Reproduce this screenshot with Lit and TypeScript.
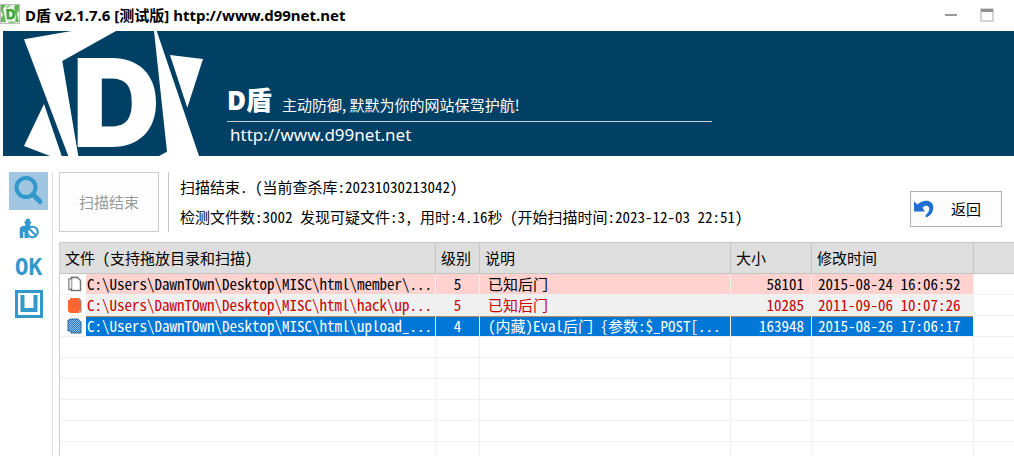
import { LitElement, html, css, svg } from "lit";
import { customElement, property, state } from "lit/decorators.js";
import { classMap } from "lit/directives/class-map.js";

interface ScanRow {
  path: string;
  level: number;
  note: string;
  size: number;
  modified: string;
  tone: "danger" | "muted" | "selected";
}

const ROWS: ScanRow[] = [
  {
    path: "C:\\Users\\DawnTOwn\\Desktop\\MISC\\html\\member\\...",
    level: 5,
    note: "已知后门",
    size: 58101,
    modified: "2015-08-24 16:06:52",
    tone: "danger",
  },
  {
    path: "C:\\Users\\DawnTOwn\\Desktop\\MISC\\html\\hack\\up...",
    level: 5,
    note: "已知后门",
    size: 10285,
    modified: "2011-09-06 10:07:26",
    tone: "muted",
  },
  {
    path: "C:\\Users\\DawnTOwn\\Desktop\\MISC\\html\\upload_...",
    level: 4,
    note: "(内藏)Eval后门 {参数:$_POST[...",
    size: 163948,
    modified: "2015-08-26 17:06:17",
    tone: "selected",
  },
];

const EMPTY_ROWS = 6;

@customElement("title-bar")
export class TitleBar extends LitElement {
  static styles = css`
    :host {
      display: flex;
      align-items: center;
      height: 31px;
      padding-right: 20px;
      background: #fff;
    }
    .app-icon {
      width: 20px;
      height: 20px;
      margin: 0 5px 4px 0;
    }
    .title {
      flex: 1;
      margin: 0;
      font: 700 15px/29px "Noto Sans", "Noto Sans CJK SC", sans-serif;
      color: #000;
      white-space: nowrap;
    }
    .control {
      display: block;
      width: 14px;
      height: 14px;
      margin: 0 0 2px 22px;
      padding: 0;
      border: 0;
      background: none;
    }
    svg {
      display: block;
    }
  `;

  render() {
    return html`
      <svg class="app-icon" viewBox="0 0 20 20" aria-hidden="true">
        <rect x="0.5" y="0.5" width="19" height="19" fill="#eef5ea" stroke="#b9bcb9" />
        <path d="M1 1h5l-3 4 3 13H1V14l2-3-2-4z M15 1h4v5l-2 4 2 8h-4l1-6-2-8z" fill="#63b657" />
        <path
          d="M6 5h4.500c3.300 0 5 2 5 5s-1.700 5.500-5 5.500H7z M9 7.500l.4 5.500h1c1.500 0 2.100-1.200 2.100-2.900S11.800 7.500 10.300 7.500z"
          fill="#45a53c"
          fill-rule="evenodd"
        />
        <path d="M6 2l6-1-5 3z M8 17.500h7l-1 1.500H9z" fill="#7cc46f" />
      </svg>
      <h1 class="title">D盾 v2.1.7.6 [测试版] http://www.d99net.net</h1>
      <button class="control" aria-label="最小化">
        <svg width="14" height="14"><rect x="1" y="6" width="12" height="2" fill="#999" /></svg>
      </button>
      <button class="control" aria-label="最大化">
        <svg width="14" height="14">
          <rect x="1" y="1" width="12" height="12" fill="#fff" stroke="#aaa" />
          <rect x="1" y="1" width="12" height="3" fill="#909090" />
        </svg>
      </button>
    `;
  }
}

@customElement("brand-banner")
export class BrandBanner extends LitElement {
  static styles = css`
    :host {
      display: flex;
      height: 125px;
      margin-left: 3px;
      background: #004065;
      color: #fff;
    }
    .logo {
      flex: none;
      width: 204px;
      height: 125px;
    }
    .mark {
      font: 900 122px "Inter", sans-serif;
      fill: #fff;
    }
    .copy {
      flex: 0 1 485px;
      min-width: 0;
      margin-left: 20px;
      padding-top: 54px;
    }
    .line {
      display: flex;
      align-items: flex-start;
      height: 36px;
      border-bottom: 1px solid #c4d4df;
      white-space: nowrap;
    }
    .name {
      font: 900 26px/30px "Open Sans", "Noto Sans CJK SC", sans-serif;
    }
    .slogan {
      margin-left: 10px;
      font: 400 15px/40px "Noto Sans CJK SC", sans-serif;
    }
    .url {
      display: block;
      padding-left: 3px;
      font: 400 17px/26px "Noto Sans", sans-serif;
      color: inherit;
      text-decoration: none;
    }
  `;

  render() {
    return html`
      <svg class="logo" viewBox="0 0 204 125" role="img" aria-label="D盾">
        <g fill="#fff">
          <path d="M21 8.300L68.700 0H113L59.300 30l16 95h-10z" />
          <path d="M41 73L21 115l26 10h11.700z" />
          <path d="M151 0h2.700L196 125h-40l8-4.300z" />
          <path d="M167 24l33 4-15.700 48.700z" />
        </g>
        <text class="mark" x="69" y="116">D</text>
      </svg>
      <div class="copy">
        <div class="line">
          <span class="name">D盾</span>
          <span class="slogan">主动防御, 默默为你的网站保驾护航!</span>
        </div>
        <a class="url" href="#">http://www.d99net.net</a>
      </div>
    `;
  }
}

@customElement("side-nav")
export class SideNav extends LitElement {
  static styles = css`
    :host {
      display: flex;
      flex-direction: column;
      width: 39px;
      padding: 0 4px 0 9px;
      border-right: 1px solid #dedede;
    }
    .item {
      display: flex;
      align-items: center;
      justify-content: center;
      height: 38px;
      padding: 0;
      border: 0;
      background: none;
      color: #3399cc;
      font: 700 23px/36px "DejaVu Sans Mono", monospace;
    }
    .active {
      background: #a1c6e2;
    }
  `;

  @state() private active = "scan";

  private item(id: string, label: string, content: unknown) {
    return html`<button
      class=${classMap({ item: true, active: this.active === id })}
      aria-label=${label}
      @click=${() => (this.active = id)}
    >
      ${content}
    </button>`;
  }

  render() {
    return html`
      ${this.item(
        "scan",
        "扫描",
        html`<svg width="30" height="30" viewBox="0 0 30 30" fill="none" stroke="currentColor">
          <circle cx="12" cy="11.500" r="9.500" stroke-width="4" />
          <path d="M19 18.500l7 7" stroke-width="5" stroke-linecap="round" />
        </svg>`
      )}
      ${this.item(
        "guard",
        "防护",
        html`<svg width="20" height="22" viewBox="0 0 20 22">
          <path
            d="M5 4h1l1-2.500C8 .3 10 .3 10.800 1.500L11.500 4h.8v1l-1 1v2.200H13L9.500 12v8H5.500v-6H4.300v6H.7V11c0-1.500 1-2.400 3.300-3L6.500 7.500 6 5H5z"
            fill="currentColor"
          />
          <circle cx="13.500" cy="14" r="5.200" fill="#fff" stroke="currentColor" stroke-width="2" />
          <path d="M10 10.500l7 7" stroke="currentColor" stroke-width="2" />
        </svg>`
      )}
      ${this.item("ok", "OK", "OK")}
      ${this.item(
        "u",
        "U",
        html`<svg width="28" height="30" viewBox="0 0 28 30" fill="none" stroke="currentColor">
          <rect x="1.500" y="1.500" width="25" height="25" stroke-width="3" />
          <path d="M7.500 5v15h13V5" stroke-width="4" />
        </svg>`
      )}
    `;
  }
}

@customElement("scan-status")
export class ScanStatus extends LitElement {
  static styles = css`
    :host {
      display: flex;
      align-items: flex-start;
      padding-right: 12px;
      font: 400 15px/30px "Noto Sans Mono CJK SC", "Liberation Mono", "Noto Sans CJK SC", monospace;
      color: #000;
    }
    button {
      flex: none;
      padding: 0;
      font: inherit;
      background: #fdfdfd;
    }
    .scan {
      width: 100px;
      height: 60px;
      border: 1px solid #ccc;
      color: #999;
    }
    .summary {
      flex: 1;
      min-width: 0;
      height: 60px;
      margin-left: 9px;
      padding-left: 11px;
      border-left: 1px solid #c4c4c4;
      white-space: nowrap;
    }
    .summary p {
      margin: 0;
    }
    .back {
      display: flex;
      align-items: center;
      gap: 17px;
      width: 92px;
      height: 36px;
      margin-top: 19px;
      padding-left: 3px;
      border: 1px solid #b0b0b0;
      color: #000;
    }
  `;

  render() {
    return html`
      <button class="scan" disabled>扫描结束</button>
      <div class="summary">
        <p>扫描结束. (当前查杀库:20231030213042)</p>
        <p>检测文件数:3002 发现可疑文件:3, 用时:4.16秒 (开始扫描时间:2023-12-03 22:51)</p>
      </div>
      <button class="back">
        <svg width="20" height="18" viewBox="0 0 20 18" aria-hidden="true">
          <path
            d="M0 1.500l3.500 3C7 1 11 .2 14.500 1c4.500 1.200 6 6 4 10.500-1.200 2.800-3.500 5-6.500 6l-.5-2.200c2.800-2.300 4.500-5.200 3.500-7.800-1-2.300-4-2.500-6.500.2L11 11.500H0z"
            fill="#1f6fd0"
          />
        </svg>
        返回
      </button>
    `;
  }
}

@customElement("file-icon")
export class FileIcon extends LitElement {
  static styles = css`
    :host,
    svg {
      display: block;
    }
  `;

  @property() tone: ScanRow["tone"] = "danger";

  private glyph() {
    if (this.tone === "muted") {
      return svg`
        <path d="M3 1h9l2 2v11h-2v2H3l-2-2V3h2z" fill="#ff6633" />
        <path d="M11 1l3 3v11h-2" fill="none" stroke="#8a8a8a" />`;
    }
    if (this.tone === "selected") {
      return svg`
        <defs>
          <pattern id="dots" width="2" height="2" patternUnits="userSpaceOnUse">
            <rect width="2" height="2" fill="#8fc0ee" />
            <rect width="1" height="1" fill="#2a76bd" />
            <rect x="1" y="1" width="1" height="1" fill="#2a76bd" />
          </pattern>
        </defs>
        <path d="M3 1h8l3 3v11H4v-2H1V2h2z" fill="url(#dots)" stroke="#2b6396" />`;
    }
    return svg`
      <path d="M4.500 3H2v10.500h2M11 1.500H4.500V13" fill="none" stroke="#777" stroke-width="1.500" />
      <path d="M4.500 1.500h6l3 3v10h-9z" fill="#fff" stroke="#777" stroke-width="1.500" />
      <path d="M2.500 13.500v-10h2v8z" fill="#eee" />`;
  }

  render() {
    return html`<svg width="15" height="17" viewBox="0 0 15 17">${this.glyph()}</svg>`;
  }
}

@customElement("result-table")
export class ResultTable extends LitElement {
  static styles = css`
    :host {
      display: block;
      border-left: 1px solid #cfcfcf;
      font: 400 15px/20px "Noto Sans Mono CJK SC", "Liberation Mono", "Noto Sans CJK SC", monospace;
      color: #000;
    }
    table {
      width: 100%;
      border-collapse: separate;
      border-spacing: 0;
      table-layout: fixed;
    }
    .c-file {
      width: 376px;
    }
    .c-level {
      width: 44px;
    }
    .c-note {
      width: 251px;
    }
    .c-size {
      width: 81px;
    }
    .c-time {
      width: 162px;
    }
    th {
      box-sizing: border-box;
      height: 32px;
      padding: 0 0 0 5px;
      border: solid #c4c4c4;
      border-width: 1px 1px 1px 0;
      background: #dedede;
      font-weight: 400;
      text-align: left;
      white-space: nowrap;
    }
    th:last-child {
      border-right: 0;
    }
    td {
      box-sizing: border-box;
      height: 21px;
      padding: 0;
      border-right: 1px solid #f0f0f0;
      border-bottom: 1px solid #f0f0f0;
      overflow: hidden;
      white-space: nowrap;
    }
    td:last-child {
      border-right: 0;
    }
    .file {
      display: flex;
    }
    .icon {
      flex: none;
      width: 19px;
      padding: 2px 0 0 7px;
      height: 18px;
    }
    .path {
      flex: 1;
      min-width: 0;
      overflow: hidden;
      padding-left: 1px;
    }
    .level {
      text-align: center;
    }
    .note {
      padding-left: 8px;
    }
    .size {
      padding-right: 7px;
      text-align: right;
    }
    .time {
      padding-left: 6px;
    }
    .danger .fill {
      background: #ffd2d0;
    }
    .muted .fill {
      background: #f0f0f0;
      color: #c80000;
    }
    .selected .fill {
      background: #0078d7;
      color: #fff;
    }
    .selected td.fill,
    .selected .path {
      box-shadow: inset 0 1px #b98a55;
    }
  `;

  render() {
    return html`
      <table>
        <colgroup>
          <col class="c-file" />
          <col class="c-level" />
          <col class="c-note" />
          <col class="c-size" />
          <col class="c-time" />
          <col />
        </colgroup>
        <thead>
          <tr>
            <th>文件 (支持拖放目录和扫描)</th>
            <th>级别</th>
            <th>说明</th>
            <th>大小</th>
            <th>修改时间</th>
            <th></th>
          </tr>
        </thead>
        <tbody>
          ${ROWS.map(
            (row) => html`<tr class=${row.tone}>
              <td>
                <div class="file">
                  <span class="icon"><file-icon .tone=${row.tone}></file-icon></span>
                  <span class="path fill">${row.path}</span>
                </div>
              </td>
              <td class="level fill">${row.level}</td>
              <td class="note fill">${row.note}</td>
              <td class="size fill">${row.size}</td>
              <td class="time fill">${row.modified}</td>
              <td></td>
            </tr>`
          )}
          ${Array.from(
            { length: EMPTY_ROWS },
            () => html`<tr><td></td><td></td><td></td><td></td><td></td><td></td></tr>`
          )}
        </tbody>
      </table>
    `;
  }
}

@customElement("app-root")
export class AppRoot extends LitElement {
  static styles = css`
    :host {
      display: flex;
      flex-direction: column;
      height: 100vh;
      overflow: hidden;
      background: #fff;
    }
    .body {
      display: flex;
      flex: 1;
      min-height: 0;
      padding-top: 16px;
    }
    .main {
      display: flex;
      flex: 1;
      flex-direction: column;
      gap: 10px;
      min-width: 0;
      padding-left: 6px;
    }
  `;

  render() {
    return html`
      <title-bar></title-bar>
      <brand-banner></brand-banner>
      <div class="body">
        <side-nav></side-nav>
        <main class="main">
          <scan-status></scan-status>
          <result-table></result-table>
        </main>
      </div>
    `;
  }
}
